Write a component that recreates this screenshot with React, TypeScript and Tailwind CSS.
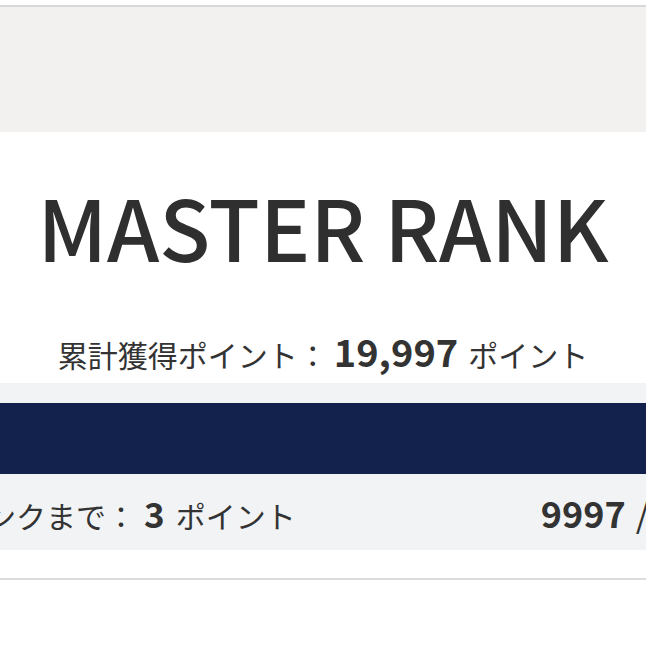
const font = { fontFamily: '"Noto Sans CJK JP", "Noto Sans", sans-serif' };

function RankHeader() {
  return (
    <div className="pt-[5px]">
      <div className="h-[2px] bg-[#d8d8dc]" />
      <div className="h-[125px] bg-[#f2f1ef]" />
    </div>
  );
}

function PointSummary() {
  return (
    <div className="flex flex-col items-center bg-white pt-[52px]">
      <h1 className="text-[84px] font-medium leading-none text-[#2f2f2f]">MASTER RANK</h1>
      <p className="mt-[64px] flex items-baseline text-[30px] leading-none text-[#333]">
        <span>累計獲得ポイント：</span>
        <span className="ml-[6px] text-[38px] font-bold">19,997</span>
        <span className="ml-[10px]">ポイント</span>
      </p>
    </div>
  );
}

function NextRank() {
  return (
    <div className="mt-[13px] bg-[#f2f3f5] pt-[20px]">
      <div className="h-[71px] bg-[#12224c]" />
      <div className="-ml-[104px] -mr-[120px] flex h-[76px] items-center justify-between">
        <p className="flex items-baseline text-[30px] leading-none text-[#333]">
          <span>次のランクまで：</span>
          <span className="ml-[8px] text-[35px] font-bold">3</span>
          <span className="ml-[11px]">ポイント</span>
        </p>
        <p className="flex items-baseline text-[36px] font-bold leading-none text-[#333]">
          <span>9997</span>
          <span className="ml-[10px] font-normal">/</span>
          <span className="ml-[10px]">10000</span>
        </p>
      </div>
    </div>
  );
}

export default function App() {
  return (
    <div className="h-[646px] w-[646px] overflow-hidden bg-white" style={font}>
      <RankHeader />
      <PointSummary />
      <NextRank />
      <div className="mt-[28px] h-[2px] bg-[#dcdcdc]" />
    </div>
  );
}
